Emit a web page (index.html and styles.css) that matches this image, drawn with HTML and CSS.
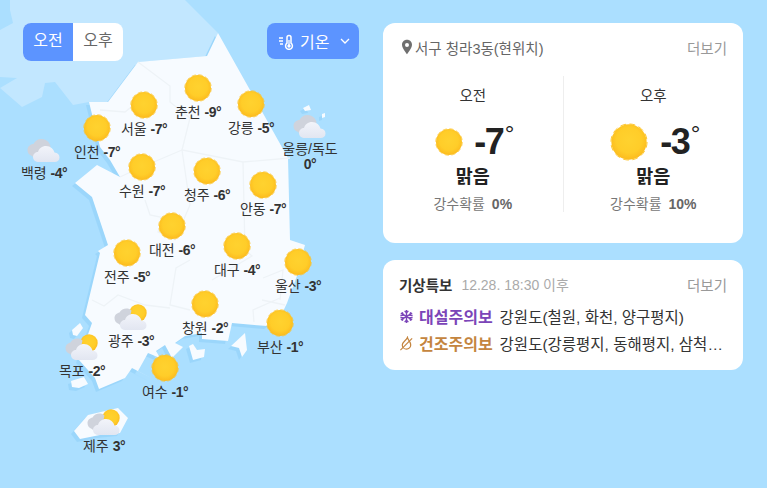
FILE: index.html
```html
<!DOCTYPE html>
<html lang="ko">
<head>
<meta charset="utf-8">
<title>날씨</title>
<link rel="stylesheet" href="styles.css">
</head>
<body>
<svg class="defs" width="0" height="0" aria-hidden="true">
  <defs>
    <radialGradient id="sunfill" cx="50%" cy="45%" r="55%">
      <stop offset="0" stop-color="#ffd22f"/>
      <stop offset="0.65" stop-color="#ffcd29"/>
      <stop offset="1" stop-color="#fcbb1e"/>
    </radialGradient>
    <linearGradient id="cloudfill" x1="0" y1="0" x2="0" y2="1">
      <stop offset="0" stop-color="#f2f4fa"/>
      <stop offset="1" stop-color="#e2e6f1"/>
    </linearGradient>
    <symbol id="sun" viewBox="0 0 28 28">
      <circle cx="14" cy="14" r="13" fill="url(#sunfill)"/>
      <circle cx="14" cy="14" r="13.300" fill="none" stroke="#fdc325" stroke-width="0.700" stroke-dasharray="4.300 2.660"/>
    </symbol>
    <symbol id="cloud" viewBox="0 0 34 28">
      <path class="cloud-back" d="M5 21c-3-1-4.500-3-4.500-6 0-3.500 3-6 6-6 1.500-3 4-5 8-5 4.500 0 8 3 9 7l-4 12H7z"/>
      <path fill="url(#cloudfill)" d="M12 27c-3.500 0-6-2-6-5s2.500-5 5-5c1-3.500 4-6 8-6 4.500 0 7.500 3 8.500 6.500 3 .2 5 2.300 5 5 0 2.800-2 4.500-5 4.500z"/>
    </symbol>
    <symbol id="suncloud" viewBox="0 0 34 28">
      <circle cx="24" cy="10" r="8.700" fill="url(#sunfill)"/>
      <path class="cloud-back" d="M5 21c-3-1-4.500-3-4.500-6 0-3 2.500-5 5-5.500 1.500-2.500 4-4 7-4 2 0 3.500 .6 5 2L14 23H7z"/>
      <path fill="url(#cloudfill)" d="M12 27c-3.500 0-6-2-6-5s2.500-5 5-5c1-3.500 4-6 8-6 4.500 0 7.500 3 8.500 6.500 3 .2 5 2.300 5 5 0 2.800-2 4.500-5 4.500z"/>
    </symbol>
  </defs>
</svg>

<main class="page">
  <section class="map">
    <svg class="map-art" viewBox="0 0 383 488" width="383" height="488" aria-hidden="true">
      <path class="north" d="M10 0H185L218 33L207 56L138 62L108 102L89 102L73 105L55 82L45 83L42 97L22 107L0 88L17 78L0 77V30L13 23L10 10Z"/>
      <g class="coast">
        <path d="M218 33L250 90L288 158L290 240L305 245L303 252L298 273L287 303L280 318L267 326L232 323L228 341L202 339L202 333L185 336L175 343L183 347L172 358L165 345L156 351L160 358L148 353L138 371L155 380L132 368L125 378L99 389L95 378L79 360L92 323L85 315L100 253L98 251L108 245L92 197L75 183L97 165L120 177L110 160L100 147L89 102L108 102L138 62L207 56Z"/>
        <path d="M72 330L80 323L83 328L77 336L73 335Z"/>
        <path d="M71 381L84 377L88 384L79 388L72 387Z"/>
        <path d="M189 346L193 344L197 350L205 349L204 357L193 360Z"/>
        <path d="M231 346L245 333L247 350L242 357L239 348Z"/>
        <path d="M74 431L88 415L118 408L128 418L120 433L100 435L80 439Z"/>
        <path d="M303 108L309 105L311 110L305 111Z"/>
        <path d="M322 114L325 113L325 117L322 118Z"/>
      </g>
      <g class="lines">
        <path d="M138 62L170 86V102L190 118L182 150L243 162L290 158"/>
        <path d="M100 110L125 112L140 100M120 177L135 170L182 150M145 200L150 215L165 218L158 232L175 240L190 205L182 150"/>
        <path d="M190 260L176 268L170 305L190 310M92 300L104 306L118 295L145 305L170 308M243 162L245 250L252 256L212 280M263 278L283 270L280 300M262 300L285 305M254 322L253 310L280 298"/>
      </g>
    </svg>

    <div class="map-controls">
      <div class="toggle">
        <span class="toggle-item is-on">오전</span>
        <span class="toggle-item">오후</span>
      </div>
      <div class="select">
        <svg class="thermo" viewBox="0 0 18 18" width="18" height="18" aria-hidden="true">
          <path d="M1 6h4M1 9h4M2 12h3" fill="none" stroke="#fff" stroke-width="1.400"/>
          <path d="M9 5.500a2 2 0 0 1 4 0v5.700a3.400 3.400 0 1 1-4 0z" fill="none" stroke="#fff" stroke-width="1.500"/>
          <circle cx="11" cy="14" r="1.700" fill="#fff"/>
          <path d="M11 8v6" stroke="#fff" stroke-width="1.300"/>
        </svg>
        <span class="select-label">기온</span>
        <svg class="chev" viewBox="0 0 10 6" width="10" height="6" aria-hidden="true"><path d="M1 1l4 4 4-4" fill="none" stroke="#fff" stroke-width="1.300"/></svg>
      </div>
    </div>

    <div class="pin pin-chuncheon"><svg class="ic"><use href="#sun"/></svg><p class="lb">춘천 <b>-9°</b></p></div>
    <div class="pin pin-seoul"><svg class="ic"><use href="#sun"/></svg><p class="lb">서울 <b>-7°</b></p></div>
    <div class="pin pin-gangneung"><svg class="ic"><use href="#sun"/></svg><p class="lb">강릉 <b>-5°</b></p></div>
    <div class="pin pin-incheon"><svg class="ic"><use href="#sun"/></svg><p class="lb">인천 <b>-7°</b></p></div>
    <div class="pin pin-baengnyeong"><svg class="ic wide"><use href="#cloud"/></svg><p class="lb">백령 <b>-4°</b></p></div>
    <div class="pin pin-ulleung"><svg class="ic wide"><use href="#cloud"/></svg><p class="lb lb-two">울릉/독도<br><b>0°</b></p></div>
    <div class="pin pin-suwon"><svg class="ic"><use href="#sun"/></svg><p class="lb">수원 <b>-7°</b></p></div>
    <div class="pin pin-cheongju"><svg class="ic"><use href="#sun"/></svg><p class="lb">청주 <b>-6°</b></p></div>
    <div class="pin pin-andong"><svg class="ic"><use href="#sun"/></svg><p class="lb">안동 <b>-7°</b></p></div>
    <div class="pin pin-daejeon"><svg class="ic"><use href="#sun"/></svg><p class="lb">대전 <b>-6°</b></p></div>
    <div class="pin pin-daegu"><svg class="ic"><use href="#sun"/></svg><p class="lb">대구 <b>-4°</b></p></div>
    <div class="pin pin-jeonju"><svg class="ic"><use href="#sun"/></svg><p class="lb">전주 <b>-5°</b></p></div>
    <div class="pin pin-ulsan"><svg class="ic"><use href="#sun"/></svg><p class="lb">울산 <b>-3°</b></p></div>
    <div class="pin pin-changwon"><svg class="ic"><use href="#sun"/></svg><p class="lb">창원 <b>-2°</b></p></div>
    <div class="pin pin-busan"><svg class="ic"><use href="#sun"/></svg><p class="lb">부산 <b>-1°</b></p></div>
    <div class="pin pin-gwangju"><svg class="ic wide"><use href="#suncloud"/></svg><p class="lb">광주 <b>-3°</b></p></div>
    <div class="pin pin-mokpo"><svg class="ic wide"><use href="#suncloud"/></svg><p class="lb">목포 <b>-2°</b></p></div>
    <div class="pin pin-yeosu"><svg class="ic"><use href="#sun"/></svg><p class="lb">여수 <b>-1°</b></p></div>
    <div class="pin pin-jeju"><svg class="ic wide"><use href="#suncloud"/></svg><p class="lb">제주 <b>3°</b></p></div>
  </section>

  <aside class="side">
    <section class="card card-now">
      <header class="card-head">
        <svg class="loc" viewBox="0 0 12 16" width="12" height="16" aria-hidden="true"><path fill-rule="evenodd" fill="#6f6f6f" d="M6 .8C3 .8 1 3 1 5.800c0 3.500 5 9.400 5 9.400s5-5.900 5-9.400C11 3 9 .8 6 .8zm0 3.200a2 2 0 1 1 0 4 2 2 0 0 1 0-4z"/></svg>
        <span class="place">서구 청라3동(현위치)</span>
        <a class="more">더보기</a>
      </header>
      <div class="now-cols">
        <div class="now-col">
          <p class="now-time">오전</p>
          <div class="now-temp"><svg class="now-sun small"><use href="#sun"/></svg><span class="deg">-7<i>°</i></span></div>
          <p class="now-sky">맑음</p>
          <p class="now-rain">강수확률 <b>0%</b></p>
        </div>
        <div class="now-col">
          <p class="now-time">오후</p>
          <div class="now-temp"><svg class="now-sun big"><use href="#sun"/></svg><span class="deg">-3<i>°</i></span></div>
          <p class="now-sky">맑음</p>
          <p class="now-rain">강수확률 <b>10%</b></p>
        </div>
      </div>
    </section>

    <section class="card card-alert">
      <header class="alert-head">
        <strong class="alert-title">기상특보</strong>
        <span class="alert-time">12.28. 18:30 이후</span>
        <a class="more">더보기</a>
      </header>
      <ul class="alerts">
        <li class="alert">
          <svg class="alert-ic" viewBox="0 0 16 16" width="15" height="15" aria-hidden="true"><g fill="none" stroke="#7b45b8" stroke-width="1.500"><path d="M8 1v14M2 4.500l12 7M14 4.500l-12 7"/><path d="M6 2l2 2 2-2M6 14l2-2 2 2M1.500 7l3-.5L3.500 3.500M14.500 7l-3-.5 1-3M1.500 9l3 .5-1 3M14.500 9l-3 .5 1 3"/></g></svg>
          <b class="alert-name snow">대설주의보</b>
          <span class="alert-area">강원도(철원, 화천, 양구평지)</span>
        </li>
        <li class="alert">
          <svg class="alert-ic" viewBox="0 0 16 16" width="15" height="15" aria-hidden="true"><g fill="none" stroke="#c4853f" stroke-width="1.300"><path d="M9 1.500c.5 3 3.500 4.500 3.500 8a4.500 4.500 0 0 1-9 0C3.500 6.500 7.500 5 9 1.500z"/><path d="M1.500 15L14 2.500"/></g></svg>
          <b class="alert-name dry">건조주의보</b>
          <span class="alert-area">강원도(강릉평지, 동해평지, 삼척평지, 속초평지)</span>
        </li>
      </ul>
    </section>
  </aside>
</main>
</body>
</html>
```

FILE: styles.css
```css
* { box-sizing: border-box; }
html, body { margin: 0; padding: 0; }
body {
  width: 767px;
  height: 488px;
  overflow: hidden;
  background: #abdfff;
  color: #222;
  font-family: "Liberation Sans", "Noto Sans CJK KR", sans-serif;
}
p, ul { margin: 0; padding: 0; }
ul { list-style: none; }
.defs { position: absolute; }
.page { display: flex; height: 488px; }

/* map */
.map { position: relative; flex: 0 0 383px; height: 488px; }
.map-art { position: absolute; left: 0; top: 0; }
.north { fill: #c2e7ff; }
.coast path { fill: #f7fbff; filter: drop-shadow(-3px 3px 0 #9bd6fb); }
.lines path { fill: none; stroke: #eef3f7; stroke-width: 1.300; }
.cloud-back { fill: #cfd3dc; }

.map-controls {
  position: relative;
  display: flex;
  justify-content: space-between;
  align-items: flex-start;
  padding: 23px 24px 0 23px;
}
.toggle { display: flex; height: 38px; border-radius: 8px; overflow: hidden; background: #fff; }
.toggle-item {
  width: 50px;
  line-height: 36px;
  text-align: center;
  font-size: 16px;
  color: #666;
}
.toggle-item.is-on { background: #5c94ff; color: #fff; }
.select {
  display: flex;
  align-items: center;
  width: 92px;
  height: 36px;
  padding: 0 9px 0 11px;
  border-radius: 8px;
  background: #5c94ff;
  color: #fff;
  font-size: 16px;
}
.thermo { flex: none; }
.select-label { margin-left: 4px; flex: 1; }
.chev { flex: none; }

.pin {
  position: absolute;
  width: 90px;
  display: flex;
  flex-direction: column;
  align-items: center;
}
.ic { display: block; width: 28px; height: 28px; flex: none; }
.ic.wide { width: 34px; height: 28px; }
.lb {
  margin-top: 2px;
  font-size: 14px;
  line-height: 16px;
  color: #333;
  text-align: center;
  white-space: nowrap;
}
.lb b { letter-spacing: -0.5px; font-size: 14px; }
.lb-two { margin-top: 3px; line-height: 15px; }

.pin-seoul { left: 99px; top: 91px; }
.pin-chuncheon { left: 153px; top: 74px; }
.pin-gangneung { left: 206px; top: 90px; }
.pin-incheon { left: 52px; top: 114px; }
.pin-baengnyeong { left: -1px; top: 135px; }
.pin-ulleung { left: 265px; top: 111px; }
.pin-suwon { left: 97px; top: 153px; }
.pin-cheongju { left: 162px; top: 157px; }
.pin-andong { left: 218px; top: 171px; }
.pin-daejeon { left: 127px; top: 212px; }
.pin-daegu { left: 192px; top: 232px; }
.pin-jeonju { left: 82px; top: 239px; }
.pin-ulsan { left: 253px; top: 248px; }
.pin-changwon { left: 160px; top: 290px; }
.pin-busan { left: 235px; top: 309px; }
.pin-gwangju { left: 86px; top: 303px; }
.pin-mokpo { left: 37px; top: 333px; }
.pin-yeosu { left: 120px; top: 354px; }
.pin-jeju { left: 59px; top: 408px; }

/* side column */
.side {
  flex: 0 0 360px;
  min-width: 0;
  display: flex;
  flex-direction: column;
  gap: 17px;
  padding-top: 23px;
}
.card { background: #fff; border-radius: 12px; min-width: 0; }
.card-now { height: 220px; padding-top: 15px; }
.card-head {
  display: flex;
  align-items: center;
  height: 18px;
  padding: 0 16px 0 18px;
}
.loc { flex: none; }
.place { margin-left: 2px; font-size: 14.500px; color: #666; flex: 1; }
.more { font-size: 14.500px; color: #999; }

.now-cols { display: flex; margin-top: 20px; }
.now-col {
  flex: 1 1 0;
  height: 136px;
  padding-top: 11px;
  display: flex;
  flex-direction: column;
  align-items: center;
}
.now-col + .now-col { border-left: 1px solid #eee; }
.now-time { font-size: 14.500px; line-height: 18px; color: #333; }
.now-temp {
  display: flex;
  align-items: center;
  height: 40px;
  margin-top: 17px;
  margin-left: 4px;
}
.now-sun { display: block; flex: none; }
.now-sun.small { width: 28px; height: 28px; margin-right: 11px; }
.now-sun.big { width: 38px; height: 38px; margin-right: 12px; }
.deg {
  position: relative;
  width: 40px;
  font-size: 36px;
  line-height: 40px;
  font-weight: 700;
  letter-spacing: -1.500px;
  color: #222;
}
.deg i {
  position: absolute;
  right: 0;
  top: 0;
  font-style: normal;
  font-weight: 400;
  font-size: 24px;
  line-height: 24px;
  letter-spacing: 0;
}
.now-sky { margin-top: 4px; font-size: 18.500px; line-height: 22px; font-weight: 700; color: #222; }
.now-rain { margin-top: 7px; font-size: 14px; line-height: 18px; color: #777; }
.now-rain b { margin-left: 3px; color: #666; }

.card-alert { height: 110px; padding: 15px 16px 0; }
.alert-head { display: flex; align-items: center; height: 18px; }
.alert-title { font-size: 14.500px; color: #333; }
.alert-time { margin-left: 9px; font-size: 14px; color: #aaa; flex: 1; }
.alerts { margin-top: 13px; display: flex; flex-direction: column; gap: 7px; }
.alert { display: flex; align-items: center; height: 20px; font-size: 16px; min-width: 0; }
.alert-ic { flex: none; margin-right: 5px; }
.alert-name { flex: none; margin-right: 7px; }
.alert-name.snow { color: #7b45b8; }
.alert-name.dry { color: #c4853f; }
.alert-area {
  flex: 1;
  min-width: 0;
  font-size: 15.500px;
  color: #333;
  white-space: nowrap;
  overflow: hidden;
  text-overflow: ellipsis;
}
```
